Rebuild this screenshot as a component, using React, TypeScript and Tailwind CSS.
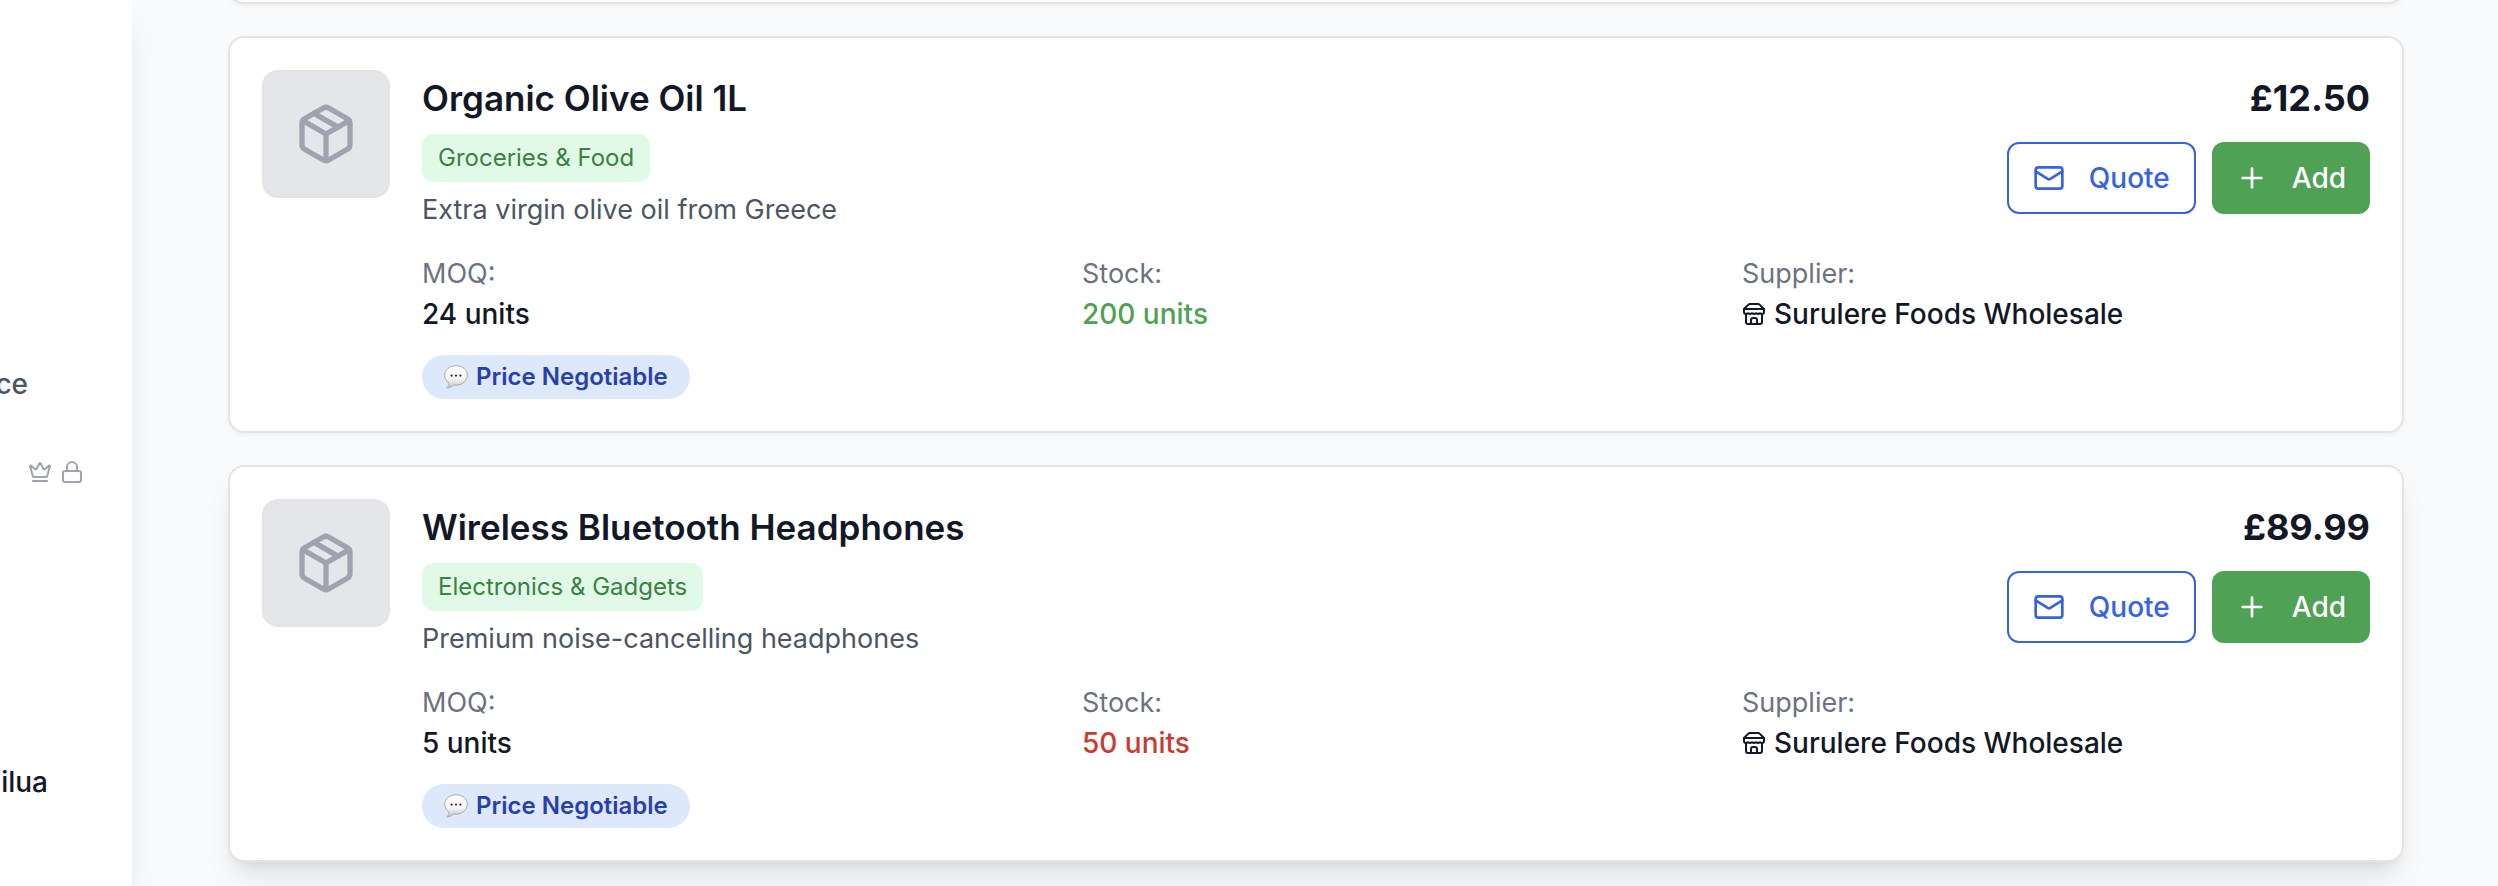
import React from "react";
import { Crown, Lock, Mail, Package, Plus } from "lucide-react";

type Product = {
  name: string;
  category: string;
  description: string;
  price: string;
  moq: string;
  stock: string;
  lowStock: boolean;
  supplier: string;
  raised: boolean;
};

const products: Product[] = [
  {
    name: "Organic Olive Oil 1L",
    category: "Groceries & Food",
    description: "Extra virgin olive oil from Greece",
    price: "£12.50",
    moq: "24 units",
    stock: "200 units",
    lowStock: false,
    supplier: "Surulere Foods Wholesale",
    raised: false,
  },
  {
    name: "Wireless Bluetooth Headphones",
    category: "Electronics & Gadgets",
    description: "Premium noise-cancelling headphones",
    price: "£89.99",
    moq: "5 units",
    stock: "50 units",
    lowStock: true,
    supplier: "Surulere Foods Wholesale",
    raised: true,
  },
];

const flatShadow = "shadow-[0_2px_4px_rgba(0,0,0,0.05)]";
const raisedShadow =
  "shadow-[0_20px_30px_-6px_rgba(0,0,0,0.1),0_8px_12px_-8px_rgba(0,0,0,0.1)]";

function SpeechBubble() {
  return (
    <svg viewBox="0 0 24 24" className="size-6 shrink-0" aria-hidden="true">
      <defs>
        <linearGradient id="bubble-fill" x1="0" y1="0" x2="0" y2="1">
          <stop offset="0" stopColor="#ffffff" />
          <stop offset="0.6" stopColor="#f4f4f4" />
          <stop offset="1" stopColor="#c4c4c4" />
        </linearGradient>
      </defs>
      <path
        d="M12 .7C5.7.7.7 4.9.7 10.2c0 3.400 1.800 6.300 4.400 8.100.100 1.700-.800 3.500-2.300 4.600 2.700.100 5.100-1 6.600-3 .900.200 1.700.300 2.600.300 6.300 0 11.300-4.500 11.300-10S18.300.7 12 .7Z"
        fill="url(#bubble-fill)"
        stroke="#a9a9a9"
        strokeWidth="1"
      />
      <circle cx="7.6" cy="10.6" r="1.1" fill="#2e2e2e" />
      <circle cx="12" cy="10.6" r="1.1" fill="#2e2e2e" />
      <circle cx="16.4" cy="10.6" r="1.1" fill="#2e2e2e" />
    </svg>
  );
}

function StoreIcon() {
  return (
    <svg
      viewBox="0 0 24 24"
      className="size-6 shrink-0"
      fill="none"
      stroke="currentColor"
      strokeWidth="2"
      strokeLinecap="round"
      strokeLinejoin="round"
      aria-hidden="true"
    >
      <path d="m2 7 4.41-4.41A2 2 0 0 1 7.83 2h8.34a2 2 0 0 1 1.42.59L22 7" />
      <path d="M4 12v8a2 2 0 0 0 2 2h12a2 2 0 0 0 2-2v-8" />
      <path d="M15 22v-4a2 2 0 0 0-2-2h-2a2 2 0 0 0-2 2v4" />
      <path d="M2 7h20" />
      <path d="M22 7v3a2 2 0 0 1-2 2a2.7 2.7 0 0 1-1.59-.63.7.7 0 0 0-.82 0A2.7 2.7 0 0 1 16 12a2.7 2.7 0 0 1-1.59-.63.7.7 0 0 0-.82 0A2.7 2.7 0 0 1 12 12a2.7 2.7 0 0 1-1.59-.63.7.7 0 0 0-.82 0A2.7 2.7 0 0 1 8 12a2.7 2.7 0 0 1-1.59-.63.7.7 0 0 0-.82 0A2.7 2.7 0 0 1 4 12a2 2 0 0 1-2-2V7" />
    </svg>
  );
}

function ProductCard({ product }: { product: Product }) {
  return (
    <article
      className={`flex gap-8 rounded-2xl border-2 border-[#e6e4e3] bg-white p-8 ${
        product.raised ? raisedShadow : flatShadow
      }`}
    >
      <div className="flex size-32 shrink-0 items-center justify-center rounded-2xl border-2 border-[#e6e4e3] bg-[#e5e6ea]">
        <Package className="size-16 text-[#9ea3af]" />
      </div>
      <div className="min-w-0 flex-1">
        <div className="flex items-start justify-between gap-8">
          <div>
            <h3 className="text-[35px] leading-14 font-semibold">{product.name}</h3>
            <span className="mt-2 block w-fit rounded-xl bg-[#e1fae8] px-4 py-2 text-2xl leading-8 text-[#3c8043]">
              {product.category}
            </span>
            <p className="mt-2 text-[27px] leading-10 text-[#4d5562]">{product.description}</p>
          </div>
          <div className="flex flex-col items-end gap-4">
            <p className="text-4xl leading-14 font-bold">{product.price}</p>
            <div className="flex gap-4">
              <button
                type="button"
                className="flex h-18 items-center gap-6 rounded-xl border-2 border-[#3563e2] bg-white px-6 text-[28px] font-medium text-[#3563e2]"
              >
                <Mail className="size-8" />
                Quote
              </button>
              <button
                type="button"
                className="flex h-18 items-center gap-6 rounded-xl bg-[#4fa154] px-6 text-[28px] font-medium text-white"
              >
                <Plus className="size-8" />
                Add
              </button>
            </div>
          </div>
        </div>
        <dl className="mt-6 grid grid-cols-3 gap-8 text-[28px] leading-10">
          <div>
            <dt className="text-[27px] text-[#6d727f]">MOQ:</dt>
            <dd className="font-medium">{product.moq}</dd>
          </div>
          <div>
            <dt className="text-[27px] text-[#6d727f]">Stock:</dt>
            <dd className={product.lowStock ? "font-medium text-[#cb3a31]" : "font-medium text-[#4fa154]"}>
              {product.stock}
            </dd>
          </div>
          <div>
            <dt className="text-[27px] text-[#6d727f]">Supplier:</dt>
            <dd className="flex items-center gap-2 font-medium">
              <StoreIcon />
              {product.supplier}
            </dd>
          </div>
        </dl>
        <div className="mt-[21px] flex h-11 w-fit items-center gap-2 rounded-full bg-[#dee8fb] px-[22px] text-2xl font-semibold text-[#2840ac]">
          <SpeechBubble />
          Price Negotiable
        </div>
      </div>
    </article>
  );
}

export default function App() {
  return (
    <div className="flex min-h-screen overflow-hidden bg-[#f9fafc] font-['Inter','Liberation_Sans',sans-serif] text-[#121826]">
      <aside className="w-33 shrink-0 bg-white pt-[364px] text-[28px] leading-10 font-medium shadow-[0_20px_30px_-6px_rgba(0,0,0,0.1),0_8px_12px_-8px_rgba(0,0,0,0.1)]">
        <div className="flex w-7 justify-end overflow-hidden text-[#4d5562]">ce</div>
        <div className="mt-14 flex gap-2 pl-7 text-[#9ea3af]">
          <Crown className="size-6" />
          <Lock className="size-6" />
        </div>
        <div className="mt-[278px] flex w-12 justify-end overflow-hidden">ilua</div>
      </aside>
      <main className="flex h-screen min-w-0 flex-1 flex-col gap-8 overflow-hidden pr-[94px] pl-24">
        <div className={`-mt-9 h-10 shrink-0 rounded-2xl border-2 border-[#e6e4e3] bg-white ${flatShadow}`} />
        {products.map((product) => (
          <ProductCard key={product.name} product={product} />
        ))}
      </main>
    </div>
  );
}
